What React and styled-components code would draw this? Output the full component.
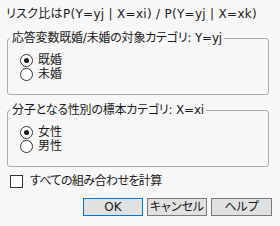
import React, { useState } from "react";
import styled, { createGlobalStyle } from "styled-components";

const GlobalStyle = createGlobalStyle`
  html, body {
    margin: 0;
    padding: 0;
    background: #f7f7f7;
  }
`

const Dialog = styled.div`
  width: 280px;
  height: 226px;
  box-sizing: border-box;
  background: #f7f7f7;
  font-family: "DejaVu Sans", "Noto Sans CJK JP", sans-serif;
  font-feature-settings: "palt";
  font-size: 12px;
  color: #1a1a1a;
  padding: 6px 8px 0 7px;
  display: flex;
  flex-direction: column;
`

const Title = styled.div`
  line-height: 16px;
  height: 16px;
  white-space: nowrap;
  margin-left: -1px;
  letter-spacing: 0.3px;
`

const Group = styled.fieldset`
  margin: ${p => p.$top}px 0 0 0;
  padding: 0 0 0 2px;
  border: 1px solid #adadad;
  border-radius: 3px;
  width: 262px;
  box-sizing: border-box;
`

const Legend = styled.legend`
  padding: 0 2px;
  line-height: 16px;
  white-space: nowrap;
  letter-spacing: -0.2px;
`

const RadioList = styled.div`
  display: flex;
  flex-direction: column;
  padding: 7px 0 13px 10px;
`

const RadioRow = styled.label`
  display: flex;
  align-items: center;
  gap: 5px;
  height: 14px;
  line-height: 14px;
  cursor: default;
`

const RadioCircle = styled.span`
  width: 11px;
  height: 11px;
  border: 1px solid #333;
  border-radius: 50%;
  background: #fff;
  display: flex;
  align-items: center;
  justify-content: center;
  flex: none;

  &::after {
    content: "";
    width: 5px;
    height: 5px;
    border-radius: 50%;
    background: ${p => (p.$on ? "#1a1a1a" : "transparent")};
  }
`

const CheckRow = styled.label`
  display: flex;
  align-items: center;
  gap: 7px;
  height: 14px;
  line-height: 14px;
  margin: 7px 0 0 3px;
  letter-spacing: -0.6px;
`

const CheckBox = styled.span`
  width: 11px;
  height: 11px;
  border: 1px solid #333;
  background: #fff;
  flex: none;
`

const ButtonRow = styled.div`
  display: flex;
  justify-content: flex-end;
  gap: 4px;
  margin-top: 10px;
`

const Button = styled.button`
  width: ${p => p.$w || 60}px;
  height: 18px;
  padding: 0;
  font-family: inherit;
  font-feature-settings: inherit;
  font-size: 12px;
  line-height: 16px;
  white-space: nowrap;
  color: #1a1a1a;
  background: #e1e1e1;
  border: 1px solid ${p => (p.$primary ? "#0078d7" : "#7a7a7a")};
  border-radius: 0;
`

function RadioGroup({ options, value, onChange }) {
  return (
    <RadioList>
      {options.map(o => (
        <RadioRow key={o} onClick={() => onChange(o)}>
          <RadioCircle $on={value === o} />
          {o}
        </RadioRow>
      ))}
    </RadioList>
  );
}

export default function App() {
  const [married, setMarried] = useState("既婚");
  const [sex, setSex] = useState("女性");

  return (
    <Dialog>
      <GlobalStyle />
      <Title>リスク比はP(Y=yj | X=xi) / P(Y=yj | X=xk)</Title>
      <Group $top={8}>
        <Legend>応答変数既婚/未婚の対象カテゴリ: Y=yj</Legend>
        <RadioGroup options={["既婚", "未婚"]} value={married} onChange={setMarried} />
      </Group>
      <Group $top={7}>
        <Legend>分子となる性別の標本カテゴリ: X=xi</Legend>
        <RadioGroup options={["女性", "男性"]} value={sex} onChange={setSex} />
      </Group>
      <CheckRow>
        <CheckBox />
        すべての組み合わせを計算
      </CheckRow>
      <ButtonRow>
        <Button $primary>OK</Button>
        <Button>キャンセル</Button>
        <Button $w={61}>ヘルプ</Button>
      </ButtonRow>
    </Dialog>
  );
}
